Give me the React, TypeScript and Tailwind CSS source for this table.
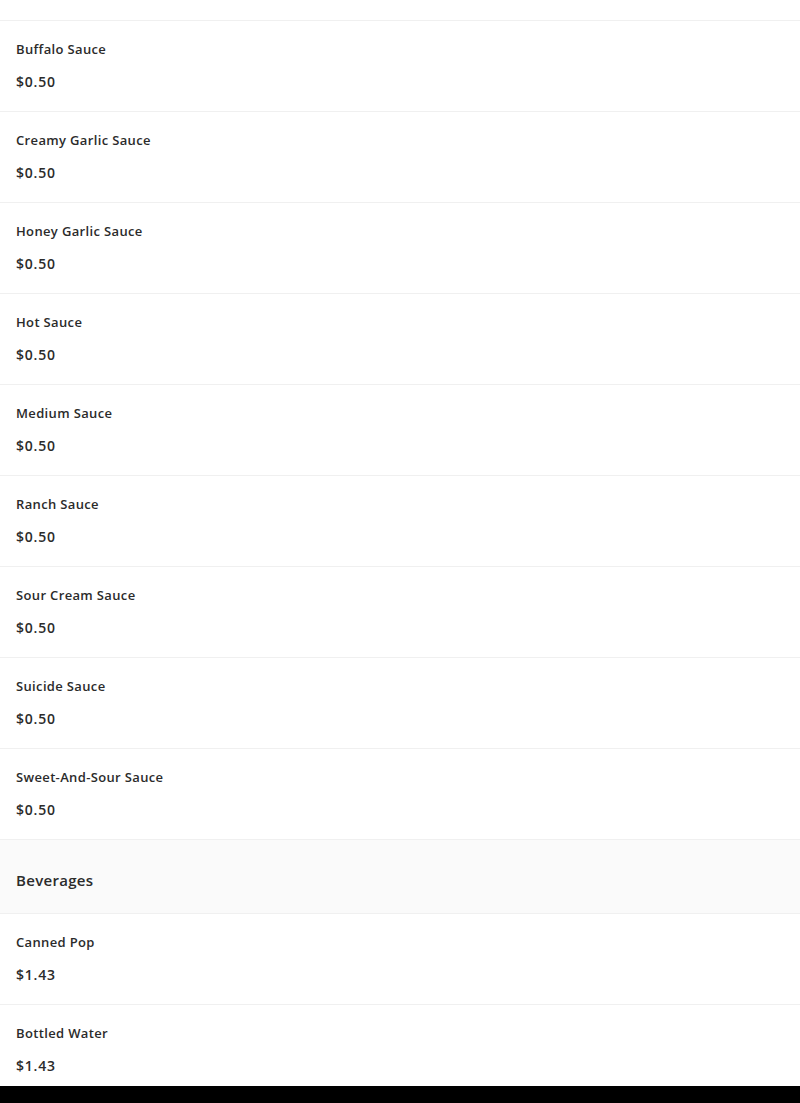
import React from "react";

type Item = { name: string; price: string };

const sauces: Item[] = [
  { name: "Buffalo Sauce", price: "$0.50" },
  { name: "Creamy Garlic Sauce", price: "$0.50" },
  { name: "Honey Garlic Sauce", price: "$0.50" },
  { name: "Hot Sauce", price: "$0.50" },
  { name: "Medium Sauce", price: "$0.50" },
  { name: "Ranch Sauce", price: "$0.50" },
  { name: "Sour Cream Sauce", price: "$0.50" },
  { name: "Suicide Sauce", price: "$0.50" },
  { name: "Sweet-And-Sour Sauce", price: "$0.50" },
];

const beverages: Item[] = [
  { name: "Canned Pop", price: "$1.43" },
  { name: "Bottled Water", price: "$1.43" },
];

const Row: React.FC<{ item: Item }> = ({ item }) => (
  <div className="border-b border-[#f0f0f0] px-4 pt-[18px] pb-[19px]">
    <p className="text-[13px] leading-5 font-semibold tracking-[0.35px] text-[#2b2b2b]">{item.name}</p>
    <p className="mt-[13px] text-[14px] leading-5 font-semibold tracking-[0.8px] text-[#2b2b2b]">{item.price}</p>
  </div>
);

export default function App() {
  return (
    <div className="min-h-screen bg-white font-['Open_Sans',sans-serif] overflow-hidden">
      <div className="-mt-[70px]">
        <Row item={{ name: "Blue Cheese Sauce", price: "$0.50" }} />
        {sauces.map((s) => (
          <Row key={s.name} item={s} />
        ))}

        {/* section header */}
        <div className="bg-[#fafafa] border-b border-[#f0f0f0] px-4 h-[74px] flex items-center">
          <h2 className="text-[15px] font-semibold tracking-[0.3px] text-[#2b2b2b] pt-[8px]">Beverages</h2>
        </div>

        {beverages.map((b) => (
          <Row key={b.name} item={b} />
        ))}
      </div>

      <div className="fixed bottom-0 left-0 right-0 h-[17px] bg-black" />
    </div>
  );
}
